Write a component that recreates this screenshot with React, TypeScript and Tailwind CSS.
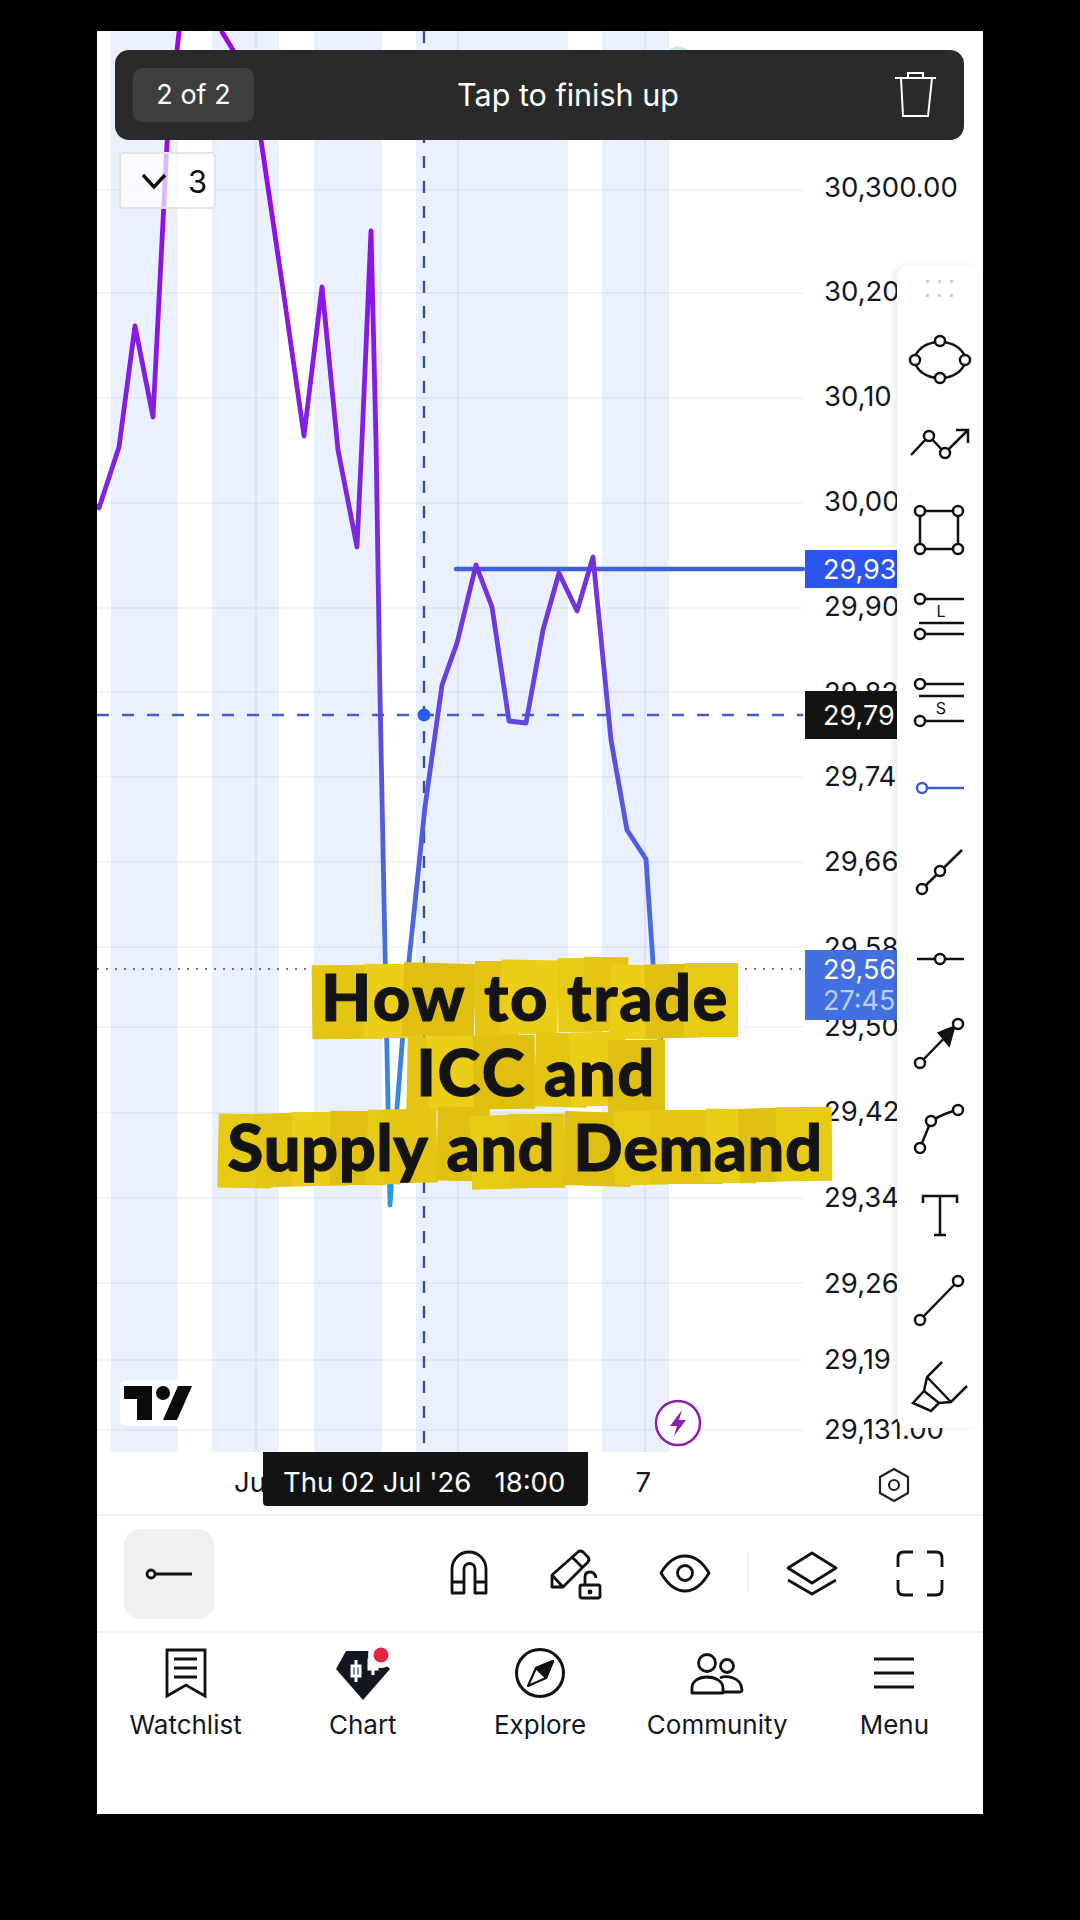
import React from "react";

const UI = "font-['Inter','Liberation_Sans',sans-serif]";

const GRID_Y = [190, 293, 398, 503, 608, 692, 777, 862, 947, 1027, 1113, 1198, 1283, 1360, 1430];
const BANDS: [number, number][] = [[111, 67], [212, 67], [314, 68], [416, 152], [602, 67]];

/* The scale is cut off where the tool rail starts, so only the visible part of a price is written */
const PRICES: [string, number][] = [
  ["30,300.00", 187], ["30,20", 291], ["30,10", 396], ["30,00", 501], ["29,90", 606],
  ["29,82", 692], ["29,74", 776], ["29,66", 861], ["29,58", 947], ["29,50", 1026],
  ["29,42", 1111], ["29,34", 1197], ["29,26", 1283], ["29,19", 1359], ["29,131.00", 1429],
];

const LINE =
  "M97 504 L99 508 L119 447 L135 326 L153 417 L167 143 L179 32 L190 -20 L215 -20 L222 32 L233 50 L261 140 L285 303 L304 436 L322 287 L338 450 L357 547 L362 440 L371 231 L376 440 L380 695 L390 1205 L397 1108 L408 970 L425 807 L442 685 L457 643 L476 565 L492 607 L509 721 L526 723 L543 630 L559 573 L577 611 L593 557 L611 740 L627 830 L646 859 L653 963 L660 1040 L668 1020";

function ChartCanvas() {
  return (
    <svg className="absolute inset-0" width="886" height="1421" viewBox="97 31 886 1421" fill="none">
      <defs>
        <linearGradient id="priceStroke" gradientUnits="userSpaceOnUse" x1="0" y1="30" x2="0" y2="1205">
          <stop offset="0" stopColor="#a100e6" />
          <stop offset="0.42" stopColor="#7a28e0" />
          <stop offset="0.72" stopColor="#4f62df" />
          <stop offset="1" stopColor="#2a9be2" />
        </linearGradient>
      </defs>
      {BANDS.map(([x, w]) => (
        <rect key={x} x={x} y={31} width={w} height={1421} fill="#ebf0fe" />
      ))}
      {GRID_Y.map((y) => (
        <line key={y} x1={97} x2={803} y1={y} y2={y} stroke="#70789a" strokeOpacity="0.08" strokeWidth="2" />
      ))}
      {[256, 458, 645].map((x) => (
        <line key={x} x1={x} x2={x} y1={31} y2={1452} stroke="#7080b0" strokeOpacity="0.11" strokeWidth="2" />
      ))}
      <circle cx="678" cy="980" r="12" stroke="#a6e0d6" strokeWidth="3" />
      <circle cx="678" cy="60" r="12" stroke="#bfe8df" strokeWidth="3" />
      <line x1="97" x2="805" y1="969" y2="969" stroke="#6a7698" strokeWidth="2" strokeDasharray="2 7" />
      <line x1="424" x2="424" y1="31" y2="1452" stroke="#2f4f9f" strokeWidth="2.4" strokeDasharray="12 13" />
      <line x1="97" x2="803" y1="715" y2="715" stroke="#3f5fd0" strokeWidth="2.4" strokeDasharray="12 13" />
      <line x1="456" x2="803" y1="569" y2="569" stroke="#3f5fd6" strokeWidth="4.5" strokeLinecap="round" />
      <path d={LINE} stroke="url(#priceStroke)" strokeWidth="4.8" strokeLinejoin="round" />
      <circle cx="424" cy="715" r="6.5" fill="#2a5cf0" />
    </svg>
  );
}

function Tag({ cls, lines }: { cls: string; lines: [string, string][] }) {
  return (
    <div className={`absolute left-[708px] w-[92px] flex flex-col justify-center pl-[18px] overflow-hidden whitespace-nowrap text-[27px] leading-[31px] ${cls}`}>
      {lines.map(([t, c]) => (
        <span key={t} className={c}>{t}</span>
      ))}
    </div>
  );
}

/* Drawing tool rail: icons are drawn in chart-page coordinates, each viewBox picks its window */
function Rail() {
  const dot = "w-[3px] h-[3px] bg-[#cfcfcf]";
  const Knob = ({ x, y, c = "#111" }: { x: number; y: number; c?: string }) => (
    <circle cx={x} cy={y} r="5" fill="#fff" stroke={c} strokeWidth="2.5" />
  );
  const S = ({ top, children }: { top: number; children: React.ReactNode }) => (
    <div className="h-[85px] flex items-center justify-center">
      <svg width="60" height="60" viewBox={`910 ${top} 60 60`} fill="none" stroke="#111" strokeWidth="2.5" className="overflow-visible">
        {children}
      </svg>
    </div>
  );
  return (
    <div className="absolute left-[800px] top-[234px] w-[84px] h-[1163px] bg-white rounded-xl shadow-[-3px_0_6px_rgba(0,0,0,0.08)] flex flex-col items-center pt-[15px]">
      <div className="grid grid-cols-3 gap-x-[9px] gap-y-[11px] mb-[20px]">
        {[0, 1, 2, 3, 4, 5].map((i) => (
          <div key={i} className={dot} />
        ))}
      </div>
      <S top={330}>
        <ellipse cx="941" cy="360" rx="25" ry="18" />
        <Knob x={941} y={341} /><Knob x={941} y={378} /><Knob x={916} y={360} /><Knob x={966} y={360} />
      </S>
      <S top={415}>
        <path d="M912 455 L930 436 L946 453 L969 430 M957 430 H969 V443" />
        <Knob x={930} y={436} /><Knob x={946} y={453} />
      </S>
      <S top={500}>
        <rect x="921" y="511" width="38" height="38" />
        <Knob x={921} y={511} /><Knob x={959} y={511} /><Knob x={921} y={549} /><Knob x={959} y={549} />
      </S>
      <S top={585}>
        <path d="M921 599 H965 M920 623 H965 M921 634 H965" />
        <Knob x={921} y={599} /><Knob x={921} y={634} />
        <text x="942" y="617" fontSize="16" textAnchor="middle" fill="#111" stroke="none" fontFamily="Inter, sans-serif">L</text>
      </S>
      <S top={670}>
        <path d="M921 684 H965 M920 696 H965 M921 721 H965" />
        <Knob x={921} y={684} /><Knob x={921} y={721} />
        <text x="942" y="714" fontSize="16" textAnchor="middle" fill="#111" stroke="none" fontFamily="Inter, sans-serif">S</text>
      </S>
      <S top={755}>
        <path d="M923 788 H965" stroke="#3f5fc8" />
        <Knob x={923} y={788} c="#3f5fc8" />
      </S>
      <S top={840}>
        <path d="M923 889 L963 850" />
        <Knob x={923} y={889} /><Knob x={941} y={871} />
      </S>
      <S top={925}>
        <path d="M918 959 H965" />
        <Knob x={941} y={959} />
      </S>
      <S top={1010}>
        <path d="M921 1063 L959 1024" />
        <path d="M955 1027 L940 1033 L950 1045 Z" fill="#111" />
        <Knob x={921} y={1063} /><Knob x={959} y={1024} />
      </S>
      <S top={1095}>
        <path d="M921 1148 L932 1121 Q945 1113 959 1110" />
        <Knob x={921} y={1148} /><Knob x={932} y={1121} /><Knob x={959} y={1110} />
      </S>
      <S top={1180}>
        <path d="M924 1203 V1196 H958 V1203 M941 1196 V1235 M935 1235 H947" />
      </S>
      <S top={1265}>
        <path d="M921 1320 L959 1281" />
        <Knob x={921} y={1320} /><Knob x={959} y={1281} />
      </S>
      <S top={1350}>
        <path d="M943 1362 L928 1377 L925 1391 L940 1403 L952 1402 L968 1386 M928 1377 L952 1402 M925 1391 L914 1403 L932 1411 L940 1403" />
      </S>
    </div>
  );
}

/* Cut-paper caption: every letter sits on its own scrap of yellow paper */
function Scrap({ ch, i }: { ch: string; i: number }) {
  const rot = (((i * 37) % 7) - 3) * 0.6;
  const dy = ((i * 53) % 9) - 4;
  const shades = ["#e7ca14", "#e3c512", "#ebce18", "#dfc011"];
  if (ch === " ") return <span className="inline-block w-[18px]" />;
  return (
    <span className="relative inline-block">
      <span
        className="absolute -z-10 -left-[9px] -right-[9px]"
        style={{ top: 2 + dy * 0.9, bottom: -1 - dy * 0.9, transform: `rotate(${rot}deg)`, background: shades[i % 4] }}
      />
      {ch}
    </span>
  );
}

function Caption() {
  const rows: [string, string][] = [
    ["How to trade", "tracking-[1.5px]"],
    ["ICC and", "tracking-[1.5px] ml-[22px]"],
    ["Supply and Demand", "tracking-[0.5px]"],
  ];
  let n = 0;
  return (
    <div className="absolute left-[120px] top-[928px] w-[616px] flex flex-col items-center text-[#141414] font-black text-[65px] leading-[75px] [-webkit-text-stroke:1px_#141414] font-['Lato','Inter',sans-serif] isolate">
      {rows.map(([r, cls]) => (
        <div key={r} className={`relative isolate whitespace-nowrap h-[75px] ${cls}`}>
          {r.split("").map((c) => {
            n += 1;
            return <Scrap key={n} ch={c} i={n} />;
          })}
        </div>
      ))}
    </div>
  );
}

function TopBanner() {
  return (
    <div className="absolute left-[18px] top-[19px] w-[849px] h-[90px] bg-[#2a2a2a] rounded-[14px] flex items-center text-white pl-[18px] pr-[26px]">
      <div className="w-[121px] h-[54px] bg-[#3e3e3e] rounded-[9px] flex items-center justify-center text-[27px]">2 of 2</div>
      <div className="flex-1 text-center text-[30.5px] pr-[12px]">Tap to finish up</div>
      <svg width="44" height="48" viewBox="894 72 44 48" fill="none" stroke="#fff" strokeWidth="2">
        <path d="M895 79 H936 M908 79 V74 H923 V79 M901 79 L903 117 H928 L932 79" />
      </svg>
    </div>
  );
}

function ToolRow() {
  return (
    <div className="h-[117px] border-b-2 border-[#f0f0f0] flex items-center pl-[27px] shrink-0">
      <div className="w-[90px] h-[90px] rounded-2xl bg-[#f0f0f0] flex items-center justify-center">
        <svg width="50" height="12" viewBox="0 0 50 12" fill="none" stroke="#111" strokeWidth="2.8">
          <circle cx="7" cy="6" r="4" /><path d="M11 6 H48" />
        </svg>
      </div>
      <svg className="ml-[234px] overflow-visible" width="495" height="50" viewBox="448 1549 495 50" fill="none" stroke="#111" strokeWidth="2.8" strokeLinejoin="round">
        <path d="M452 1593 V1569 A17 17 0 0 1 486 1569 V1593 H475 V1569 A5.5 5.5 0 0 0 464 1569 V1593 Z M452 1582 H464 M475 1582 H486" />
        <path d="M552 1587 V1575 L578 1552 Q580 1550 583 1552 L588 1557 Q590 1560 588 1562 L563 1587 Z M552 1575 L563 1587 M572 1557 L583 1568" />
        <rect x="580" y="1585" width="20" height="13" rx="2" />
        <path d="M585 1585 V1577 Q585 1572 590 1572 Q595 1572 596 1578" />
        <circle cx="590" cy="1592" r="1" fill="#111" />
        <path d="M661 1573 C668 1561 676 1556 685 1556 C694 1556 702 1561 709 1573 C702 1585 694 1591 685 1591 C676 1591 668 1585 661 1573 Z" />
        <circle cx="685" cy="1573" r="7.5" />
        <path d="M748 1552 V1592" stroke="#eeeeee" strokeWidth="2" />
        <path d="M788 1568 L812 1553 L836 1568 L812 1583 Z M788 1580 L812 1594 L836 1580" />
        <path d="M898 1567 V1558 Q898 1552 904 1552 H913 M927 1552 H936 Q942 1552 942 1558 V1567 M898 1580 V1589 Q898 1595 904 1595 H913 M927 1595 H936 Q942 1595 942 1589 V1580" />
      </svg>
    </div>
  );
}

function BottomNav() {
  const Item = ({ label, children }: { label: string; children: React.ReactNode }) => (
    <div className="flex flex-col items-center">
      <svg width="60" height="54" viewBox="0 0 60 54" fill="none" stroke="#111" strokeWidth="3" className="mt-[14px]">
        {children}
      </svg>
      <span className="text-[26px] leading-[30px] text-[#131722] mt-[9px]">{label}</span>
    </div>
  );
  return (
    <div className="flex-1 grid grid-cols-5">
      <Item label="Watchlist">
        <path d="M11 3 H49 V49 L30 38 L11 49 Z" strokeWidth="2.8" />
        <path d="M18 12 H41 M18 21 H41 M18 30 H41" />
      </Item>
      <Item label="Chart">
        <path d="M13 4 H38 L57 22 L30 53 L3 22 Z" fill="#131722" stroke="none" />
        <path d="M23 13 V35 M19 19 H27 V29 H19 Z" stroke="#fff" strokeWidth="3" />
        <path d="M40 10 V28 M36 13 H44 V22 H36 Z" stroke="#fff" strokeWidth="3" fill="#fff" />
        <circle cx="48" cy="8" r="13" fill="#fff" stroke="none" />
        <circle cx="48" cy="8" r="7.5" fill="#e5243f" stroke="none" />
      </Item>
      <Item label="Explore">
        <circle cx="30" cy="26" r="23.5" />
        <path d="M43 14 L26 21 L18 39 L36 31 Z" strokeWidth="2.2" strokeLinejoin="round" />
        <path d="M43 14 L26 21 L36 31 Z" fill="#111" strokeWidth="2.2" strokeLinejoin="round" />
      </Item>
      <Item label="Community">
        <circle cx="20" cy="16" r="8.5" strokeWidth="2.8" />
        <circle cx="40" cy="19" r="6.5" strokeWidth="2.8" />
        <path d="M5 46 V41 C5 34 12 30 20 30 C28 30 36 34 36 41 V46 Z" strokeWidth="2.8" strokeLinejoin="round" />
        <path d="M33 31 C37 29 54 28 55 43 Q55 45 52 45 H36" strokeWidth="2.8" />
      </Item>
      <Item label="Menu">
        <path d="M10 12 H50 M10 26 H50 M10 40 H50" />
      </Item>
    </div>
  );
}

export default function App() {
  return (
    <div className={`w-[1080px] h-[1920px] bg-black pt-[31px] pl-[97px] ${UI}`}>
      <div className="relative w-[886px] h-[1783px] bg-white flex flex-col overflow-hidden">
        <div className="relative h-[1421px] shrink-0">
          <ChartCanvas />
          {/* price scale */}
          {PRICES.map(([p, y]) => (
            <span key={p} className="absolute left-[727px] text-[27.5px] leading-[32px] text-[#131722] whitespace-nowrap" style={{ top: y - 31 - 16 }}>
              {p}
            </span>
          ))}
          <Tag cls="top-[519px] h-[38px] bg-[#2a55f0]" lines={[["29,93", "text-white"]]} />
          <Tag cls="top-[660px] h-[48px] bg-[#131313]" lines={[["29,79", "text-white"]]} />
          <Tag cls="top-[919px] h-[70px] bg-[#4270e0]" lines={[["29,56", "text-white"], ["27:45", "text-[#b9cef8]"]]} />

          {/* TradingView mark */}
          <div className="absolute left-[23px] top-[1349px] w-[76px] h-[46px] bg-white rounded-md">
            <svg width="76" height="46" viewBox="120 1380 76 46" fill="#0b0b0b">
              <path d="M124 1386 H152 V1420 H137 V1399 H124 Z" />
              <circle cx="163" cy="1393" r="7" />
              <path d="M178 1386 H192 L177 1420 H163 Z" />
            </svg>
          </div>

          {/* alert marker */}
          <svg className="absolute left-[557px] top-[1368px]" width="48" height="48" viewBox="0 0 48 48" fill="#fff">
            <circle cx="24" cy="24" r="22" stroke="#8a20b0" strokeWidth="2.5" />
            <path d="M28 11 L16 27 H23 L20 37 L32 21 H25 Z" fill="#8a20b0" />
          </svg>

          {/* collapsed-items badge */}
          <div className="absolute left-[22px] top-[121px] w-[97px] h-[57px] bg-white/70 border-2 border-[#e4e4e4] rounded-[4px] flex items-center text-[#111] text-[31px] leading-[40px]">
            <svg className="ml-[19px]" width="28" height="18" viewBox="0 0 28 18" fill="none" stroke="#111" strokeWidth="3.4">
              <path d="M3 3 L14 15 L25 3" />
            </svg>
            <span className="ml-[20px] pt-[2px]">3</span>
          </div>
        </div>

        {/* time axis */}
        <div className="relative h-[64px] shrink-0 border-b-2 border-[#f0f0f0] flex items-center text-[27.5px] text-[#131722]">
          <span className="ml-[137px]">Jul</span>
          <span className="ml-auto mr-[332px]">7</span>
          <svg className="absolute left-[780px] top-[16px]" width="34" height="34" viewBox="0 0 34 34" fill="none" stroke="#222" strokeWidth="2.2">
            <path d="M17 1 L31 9 V25 L17 33 L3 25 V9 Z" />
            <circle cx="17" cy="17" r="5" />
          </svg>
          <div className="absolute left-[166px] top-0 w-[325px] h-[54px] bg-[#131313] rounded-b-[4px] flex items-center pl-[20px] pt-[8px] text-white whitespace-pre">
            Thu 02 Jul '26   18:00
          </div>
        </div>

        <ToolRow />
        <BottomNav />

        <Caption />
        <Rail />
        <TopBanner />
      </div>
    </div>
  );
}
